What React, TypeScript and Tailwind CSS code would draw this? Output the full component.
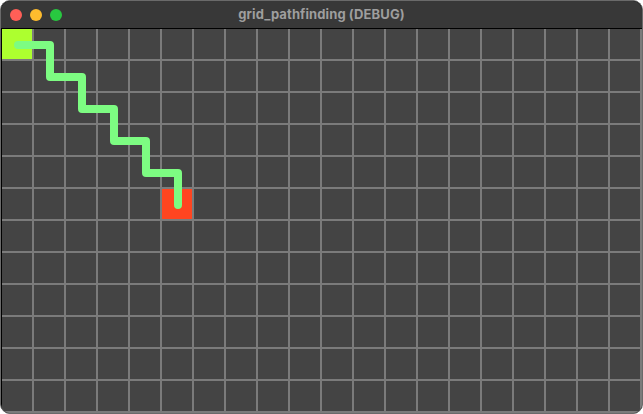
const COLS = 20;
const ROWS = 12;
const START = { c: 0, r: 0 };
const GOAL = { c: 5, r: 5 };

// staircase path between the two cells, in cell coordinates
const PATH: [number, number][] = [
  [0, 0], [1, 0], [1, 1], [2, 1], [2, 2], [3, 2], [3, 3], [4, 3], [4, 4], [5, 4], [5, 5],
];

const cellClass = (c: number, r: number) => {
  if (c === START.c && r === START.r) return 'bg-[#adff2f]';
  if (c === GOAL.c && r === GOAL.r) return 'bg-[#ff4520]';
  return 'bg-[#444444]';
};

const App = () => {
  const points = PATH.map(([c, r]) => `${c * 32 + 16},${r * 32 + 16}`).join(' ');

  return (
    <div className="w-[643px] h-[414px] bg-white">
      <div className="w-[643px] h-[414px] rounded-[10px] border border-[#6a6a6a] bg-black overflow-hidden flex flex-col">
        {/* Title bar */}
        <div className="h-[28px] shrink-0 bg-[#383838] border-b border-black relative flex items-center justify-center">
          <div className="absolute left-[9px] top-[8px] flex gap-2">
            <span className="w-3 h-3 rounded-full bg-[#ff5f57]" />
            <span className="w-3 h-3 rounded-full bg-[#febc2e]" />
            <span className="w-3 h-3 rounded-full bg-[#28c840]" />
          </div>
          <span className="text-[13px] font-bold text-[#9e9e9e] font-['Inter',sans-serif] tracking-[0.1px]">
            grid_pathfinding (DEBUG)
          </span>
        </div>

        {/* Grid */}
        <div className="pl-px">
          <div className="relative grid grid-cols-[repeat(20,32px)] grid-rows-[repeat(12,32px)] bg-[#7b7b7b]">
            {Array.from({ length: ROWS * COLS }, (_, i) => {
              const c = i % COLS;
              const r = Math.floor(i / COLS);
              return (
                <div key={i} className="border-r-2 border-b-2 border-[#7b7b7b]">
                  <div className={`w-full h-full ${cellClass(c, r)}`} />
                </div>
              );
            })}
            <svg className="absolute left-0 top-0" width={COLS * 32} height={ROWS * 32}>
              <polyline
                points={points}
                fill="none"
                stroke="#7dfc82"
                strokeWidth={8}
                strokeLinecap="round"
                strokeLinejoin="round"
              />
            </svg>
          </div>
        </div>
      </div>
    </div>
  );
};

export default App;
